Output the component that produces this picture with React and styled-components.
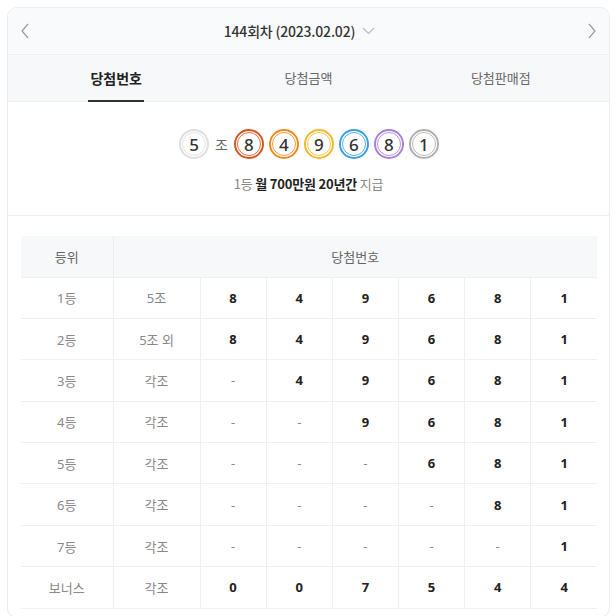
import React from "react";
import styled, { createGlobalStyle } from "styled-components";

const Global = createGlobalStyle`
  html, body { margin: 0; padding: 0; background: #fff; }
  body { font-family: "Noto Sans CJK KR", "Noto Sans", sans-serif; color: #333; }
  * { box-sizing: border-box; }
`;

const Card = styled.div`
  margin: 7px 6px 0 7px;
  width: 603px;
  border: 1px solid #ececec;
  border-radius: 10px;
  overflow: hidden;
  background: #fff;
`;

const Header = styled.div`
  height: 47px;
  display: flex;
  align-items: center;
  justify-content: space-between;
  padding: 0 5px;
  background: #f9fafb;
  border-bottom: 1px solid #eef0f2;
`;

const NavBtn = styled.button`
  width: 24px;
  height: 30px;
  border: 0;
  background: none;
  display: flex;
  align-items: center;
  justify-content: center;
  padding: 0;
  color: #999;
`;

const Title = styled.div`
  display: flex;
  align-items: center;
  gap: 7px;
  margin-right: 18px;
  font-size: 14px;
  font-weight: 500;
  color: #333;
  letter-spacing: -0.2px;
`;

const TabBar = styled.div`
  height: 47px;
  display: grid;
  grid-template-columns: repeat(3, 1fr);
  padding: 0 12px;
  background: #f7f8fa;
  border-bottom: 1px solid #eceef0;
`;

const Tab = styled.div`
  display: flex;
  justify-content: center;
  align-items: stretch;
`;

const TabLabel = styled.span`
  display: flex;
  align-items: center;
  padding: 0 2px;
  font-size: ${(p) => (p.$active ? "14px" : "13px")};
  font-weight: ${(p) => (p.$active ? 700 : 400)};
  color: ${(p) => (p.$active ? "#222" : "#666")};
  border-bottom: 2px solid ${(p) => (p.$active ? "#333" : "transparent")};
  margin-bottom: -1px;
`;

const Draw = styled.div`
  height: 114px;
  display: flex;
  flex-direction: column;
  align-items: center;
  padding-top: 27px;
  border-bottom: 1px solid #eceef0;
`;

const Balls = styled.div`
  display: flex;
  align-items: center;
  gap: 5px;
  margin-left: 1px;
`;

const Ball = styled.div`
  width: 30px;
  height: 30px;
  border-radius: 50%;
  border: 2px solid ${(p) => p.$c};
  display: flex;
  align-items: center;
  justify-content: center;
  font-family: "Noto Sans", sans-serif;
  font-size: 17px;
  font-weight: 500;
  color: #333;
  position: relative;
  &::after {
    content: "";
    position: absolute;
    inset: 1px;
    border-radius: 50%;
    border: 1px solid ${(p) => p.$c};
    opacity: 0.85;
  }
`;

const Jo = styled.span`
  font-size: 14px;
  color: #666;
  margin: 0 1px;
`;

const Prize = styled.div`
  margin-top: 15px;
  font-size: 13px;
  color: #888;
  letter-spacing: -0.2px;
  b { color: #222; font-weight: 700; }
`;

const TableWrap = styled.div`
  padding: 20px 12px 8px 13px;
`;

const Table = styled.table`
  width: 576px;
  border-collapse: collapse;
  table-layout: fixed;
`;

const Th = styled.th`
  height: 41px;
  padding-bottom: 1px;
  background: #f7f8fa;
  font-size: 13px;
  font-weight: 400;
  color: #666;
  border-bottom: 1px solid #eceef0;
  & + & { border-left: 1px solid #eceef0; }
`;

const Td = styled.td`
  height: 41.4px;
  text-align: center;
  font-size: 13px;
  font-family: "Noto Sans", "Noto Sans CJK KR", sans-serif;
  font-weight: ${(p) => (p.$num ? 700 : 400)};
  color: ${(p) => (p.$num ? "#222" : "#888")};
  border-bottom: 1px solid #f0f0f0;
  & + & { border-left: 1px solid #f0f0f0; }
`;

const Chev = ({ dir }) => (
  <svg width="10" height="16" viewBox="0 0 10 16" fill="none" stroke="#9a9a9a" strokeWidth="1.2">
    {dir === "left" ? <path d="M8 1 L2 8 L8 15" /> : <path d="M2 1 L8 8 L2 15" />}
  </svg>
);

const Down = () => (
  <svg width="13" height="8" viewBox="0 0 13 8" fill="none" stroke="#bbb" strokeWidth="1.2">
    <path d="M1 1 L6.5 6.5 L12 1" />
  </svg>
);

const balls = [
  ["8", "#d6561f"],
  ["4", "#f08a1e"],
  ["9", "#f2bb2d"],
  ["6", "#3c9fe0"],
  ["8", "#a882d9"],
  ["1", "#b0b0b0"],
];

const rows = [
  ["1등", "5조", ["8", "4", "9", "6", "8", "1"]],
  ["2등", "5조 외", ["8", "4", "9", "6", "8", "1"]],
  ["3등", "각조", ["-", "4", "9", "6", "8", "1"]],
  ["4등", "각조", ["-", "-", "9", "6", "8", "1"]],
  ["5등", "각조", ["-", "-", "-", "6", "8", "1"]],
  ["6등", "각조", ["-", "-", "-", "-", "8", "1"]],
  ["7등", "각조", ["-", "-", "-", "-", "-", "1"]],
  ["보너스", "각조", ["0", "0", "7", "5", "4", "4"]],
];

export default function App() {
  return (
    <>
      <Global />
      <Card>
        <Header>
          <NavBtn aria-label="prev"><Chev dir="left" /></NavBtn>
          <Title>
            144회차 (2023.02.02)
            <Down />
          </Title>
          <NavBtn aria-label="next"><Chev dir="right" /></NavBtn>
        </Header>
        <TabBar>
          <Tab><TabLabel $active>당첨번호</TabLabel></Tab>
          <Tab><TabLabel>당첨금액</TabLabel></Tab>
          <Tab><TabLabel>당첨판매점</TabLabel></Tab>
        </TabBar>
        <Draw>
          <Balls>
            <Ball $c="#dedede">5</Ball>
            <Jo>조</Jo>
            {balls.map(([n, c], i) => (
              <Ball key={i} $c={c}>{n}</Ball>
            ))}
          </Balls>
          <Prize>
            1등 <b>월 700만원 20년간</b> 지급
          </Prize>
        </Draw>
        <TableWrap>
          <Table>
            <colgroup>
              <col style={{ width: 92 }} />
              <col style={{ width: 87 }} />
              <col /><col /><col /><col /><col /><col />
            </colgroup>
            <thead>
              <tr>
                <Th>등위</Th>
                <Th colSpan={7}>당첨번호</Th>
              </tr>
            </thead>
            <tbody>
              {rows.map(([rank, jo, nums]) => (
                <tr key={rank}>
                  <Td>{rank}</Td>
                  <Td>{jo}</Td>
                  {nums.map((n, i) => (
                    <Td key={i} $num={n !== "-"}>{n}</Td>
                  ))}
                </tr>
              ))}
            </tbody>
          </Table>
        </TableWrap>
      </Card>
    </>
  );
}
